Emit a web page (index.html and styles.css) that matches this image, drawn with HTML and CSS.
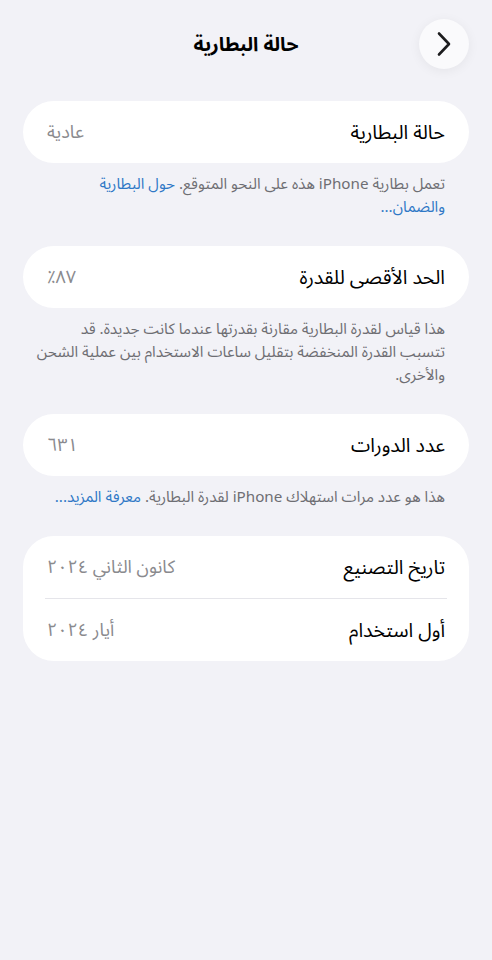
FILE: index.html
```html
<!DOCTYPE html>
<html lang="ar" dir="rtl">
<head>
    <meta charset="UTF-8">
    <meta name="viewport" content="width=device-width, initial-scale=1.0">
    <title>حالة البطارية</title>
    <link rel="stylesheet" href="styles.css">
</head>
<body>
    <div class="nav">
        <div class="nav-side">
            <button class="back" aria-label="رجوع">
                <svg width="16" height="26" viewBox="0 0 16 26"><path d="M3 2.5 L13 13 L3 23.5" fill="none" stroke="#1c1c1e" stroke-width="2.6" stroke-linecap="round" stroke-linejoin="round"/></svg>
            </button>
        </div>
        <h1 class="title">حالة البطارية</h1>
        <div class="nav-side"></div>
    </div>

    <div class="card">
        <div class="row">
            <span class="label">حالة البطارية</span>
            <span class="value">عادية</span>
        </div>
    </div>
    <p class="note">تعمل بطارية iPhone هذه على النحو المتوقع. <a href="#">حول البطارية<br>والضمان...</a></p>

    <div class="card">
        <div class="row">
            <span class="label">الحد الأقصى للقدرة</span>
            <span class="value">٨٧٪</span>
        </div>
    </div>
    <p class="note">هذا قياس لقدرة البطارية مقارنة بقدرتها عندما كانت جديدة. قد<br>تتسبب القدرة المنخفضة بتقليل ساعات الاستخدام بين عملية الشحن<br>والأخرى.</p>

    <div class="card">
        <div class="row">
            <span class="label">عدد الدورات</span>
            <span class="value">٦٣١</span>
        </div>
    </div>
    <p class="note">هذا هو عدد مرات استهلاك iPhone لقدرة البطارية. <a href="#">معرفة المزيد...</a></p>

    <div class="card">
        <div class="row">
            <span class="label">تاريخ التصنيع</span>
            <span class="value">كانون الثاني ٢٠٢٤</span>
        </div>
        <div class="divider"></div>
        <div class="row">
            <span class="label">أول استخدام</span>
            <span class="value">أيار ٢٠٢٤</span>
        </div>
    </div>
</body>
</html>
```

FILE: styles.css
```css
body {
    margin: 0;
    background-color: #f2f2f7;
    color: #000;
    font-family: "Noto Sans Arabic", "Noto Sans", "DejaVu Sans", sans-serif;
    direction: rtl;
}
.nav {
    display: grid;
    grid-template-columns: 1fr auto 1fr;
    align-items: center;
    padding: 19px 23px 0;
    margin-bottom: 32px;
}
.title {
    margin: 0;
    font-size: 19.5px;
    font-weight: bold;
}
.back {
    width: 50px;
    height: 50px;
    border: none;
    border-radius: 50%;
    background-color: #fafafc;
    box-shadow: 0 2px 12px rgba(0, 0, 0, 0.06);
    display: flex;
    align-items: center;
    justify-content: center;
    padding: 0;
    cursor: pointer;
}
.card {
    margin: 0 23px;
    background-color: #fff;
    border-radius: 31px;
}
.row {
    height: 62px;
    padding: 0 24px;
    display: flex;
    align-items: center;
    justify-content: space-between;
}
.label {
    font-size: 19.5px;
}
.value {
    font-size: 18px;
    color: #8a8a8e;
}
.divider {
    height: 1px;
    margin: 0 22px;
    background-color: #e5e5ea;
}
.note {
    margin: 0;
    padding: 10px 47px 27px 30px;
    font-size: 15.2px;
    line-height: 23px;
    color: #6e6e73;
}
.note a {
    color: #2f78c6;
    text-decoration: none;
}
```
